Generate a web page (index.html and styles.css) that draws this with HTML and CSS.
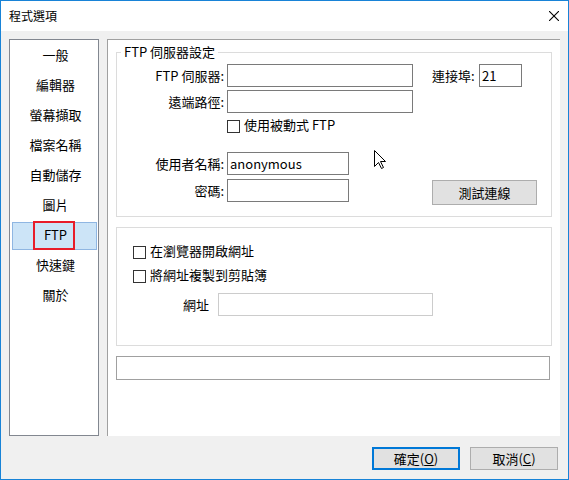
FILE: index.html
```html
<!DOCTYPE html>
<html lang="zh-Hant">
<head>
<meta charset="utf-8">
<title>程式選項</title>
<link rel="stylesheet" href="styles.css">
</head>
<body>
<div class="window">
  <div class="titlebar">
    <span class="title">程式選項</span>
    <svg class="close" width="10" height="10" viewBox="0 0 10 10"><path d="M0 0L10 10M10 0L0 10" stroke="#000" stroke-width="1.1" fill="none"/></svg>
  </div>
  <div class="body">
    <div class="main">
      <ul class="nav">
        <li class="nav-item">一般</li>
        <li class="nav-item">編輯器</li>
        <li class="nav-item">螢幕擷取</li>
        <li class="nav-item">檔案名稱</li>
        <li class="nav-item">自動儲存</li>
        <li class="nav-item">圖片</li>
        <li class="nav-item selected">FTP<span class="mark"></span></li>
        <li class="nav-item">快速鍵</li>
        <li class="nav-item">關於</li>
      </ul>
      <div class="pane">
        <fieldset class="group server">
          <legend>FTP 伺服器設定</legend>
          <div class="row r1">
            <label class="lbl">FTP 伺服器:</label>
            <span class="input wide"></span>
            <label class="port-lbl">連接埠:</label>
            <span class="input port">21</span>
          </div>
          <div class="row r2">
            <label class="lbl">遠端路徑:</label>
            <span class="input wide"></span>
          </div>
          <div class="row r3">
            <span class="check"></span><span class="check-text">使用被動式 FTP</span>
          </div>
          <div class="row r4">
            <label class="lbl">使用者名稱:</label>
            <span class="input short">anonymous</span>
          </div>
          <div class="row r5">
            <label class="lbl">密碼:</label>
            <span class="input short"></span>
            <button class="test">測試連線</button>
          </div>
        </fieldset>
        <div class="group browse">
          <div class="crow"><span class="check"></span><span class="ctext">在瀏覽器開啟網址</span></div>
          <div class="crow"><span class="check"></span><span class="ctext">將網址複製到剪貼簿</span></div>
          <div class="url-row">
            <label class="url-lbl">網址</label>
            <span class="input url"></span>
          </div>
        </div>
        <div class="status"></div>
      </div>
    </div>
    <div class="buttons">
      <button class="btn default">確定(<u>O</u>)</button>
      <button class="btn">取消(<u>C</u>)</button>
    </div>
  </div>
  <svg class="cursor" width="13" height="20" viewBox="0 0 13 20"><polygon points="0.5,0.5 0.5,16.5 4.5,12.5 7.5,18.5 9.5,17.5 6.5,11.5 11.5,11.5" fill="#fff" stroke="#000" stroke-width="1" stroke-linejoin="miter"/></svg>
</div>
</body>
</html>
```

FILE: styles.css
```css
* { box-sizing: border-box; }
html, body { margin: 0; padding: 0; }
body {
  font-family: "Noto Sans CJK TC", "Noto Sans", sans-serif;
  font-size: 13px;
  color: #000;
  background: #fff;
}
.window {
  position: relative;
  width: 569px;
  height: 480px;
  border: 1px solid #1883d7;
  display: flex;
  flex-direction: column;
}
.titlebar {
  height: 30px;
  background: #fff;
  display: flex;
  align-items: center;
  justify-content: space-between;
  padding: 0 9px 0 8px;
}
.title { font-size: 12px; line-height: 14px; }
.close { margin-top: -1px; }
.body {
  flex: 1;
  background: #f0f0f0;
  padding: 8px 8px 9px 8px;
  display: flex;
  flex-direction: column;
}
.main {
  display: flex;
  gap: 8px;
  height: 397px;
}
.nav {
  list-style: none;
  margin: 0;
  width: 90px;
  height: 397px;
  border: 1px solid #828790;
  background: #fff;
  padding: 2px 1px 0 2px;
}
.nav-item {
  position: relative;
  height: 28px;
  line-height: 24px;
  margin-bottom: 2px;
  padding-left: 2px;
  text-align: center;
  border: 1px solid transparent;
}
.nav-item.selected {
  background: #cce4f7;
  border-color: #8fb6e2;
}
.mark {
  position: absolute;
  left: 20px;
  top: -2px;
  width: 42px;
  height: 29px;
  border: 2px solid #e81c2a;
}
.pane {
  width: 453px;
  height: 397px;
  background: #fff;
  border-top: 1px solid #a0a0a0;
  border-left: 1px solid #a0a0a0;
  padding: 0 8px;
}
.group {
  width: 436px;
  border: 1px solid #dcdcdc;
  margin: 0;
}
.server {
  margin-top: 5px;
  padding: 0 0 11px 0;
}
.server legend {
  margin-left: 4px;
  padding: 0 3px;
  line-height: 14px;
  height: 14px;
}
.row {
  display: flex;
  align-items: center;
  height: 23px;
}
.r1 { margin-top: 5px; }
.r2 { margin-top: 3px; }
.r3 { margin-top: 5px; height: 16px; padding-left: 110px; }
.r4 { margin-top: 18px; }
.r5 { margin-top: 4px; height: 26px; align-items: flex-start; }
.lbl {
  width: 110px;
  padding-right: 3px;
  text-align: right;
  line-height: 23px;
}
.input {
  display: block;
  height: 23px;
  border: 1px solid #7a7a7a;
  background: #fff;
  line-height: 21px;
  padding-left: 2px;
}
.wide { width: 186px; }
.short { width: 122px; }
.port-lbl { width: 47px; margin-left: 19px; }
.port { width: 43px; }
.check {
  display: inline-block;
  width: 13px;
  height: 13px;
  border: 1px solid #333;
  background: #fff;
  flex: none;
}
.check-text { margin-left: 4px; line-height: 16px; padding-bottom: 2px; }
.test {
  margin: 1px 0 0 83px;
  width: 105px;
  height: 25px;
  background: #e1e1e1;
  border: 1px solid #adadad;
  font: inherit;
  padding: 0;
}
.browse {
  margin-top: 10px;
  height: 119px;
  padding: 12px 0 0 16px;
}
.crow {
  display: flex;
  align-items: center;
  height: 24px;
}
.ctext { margin-left: 4px; padding-bottom: 3px; line-height: 16px; }
.url-row {
  display: flex;
  align-items: center;
  margin-top: 5px;
  padding-left: 50px;
}
.url-lbl { width: 35px; }
.url { width: 215px; border-color: #cccccc; }
.status {
  margin-top: 10px;
  width: 434px;
  height: 24px;
  border: 1px solid #a0a0a0;
  background: #fff;
}
.buttons {
  display: flex;
  justify-content: flex-end;
  gap: 10px;
  margin-top: 11px;
  padding-right: 2px;
}
.btn {
  width: 88px;
  height: 23px;
  background: #e1e1e1;
  border: 1px solid #adadad;
  font: inherit;
  padding: 0;
  line-height: 20px;
}
.btn.default { border: 2px solid #0078d7; }
.cursor {
  position: absolute;
  left: 373px;
  top: 149px;
}
```
